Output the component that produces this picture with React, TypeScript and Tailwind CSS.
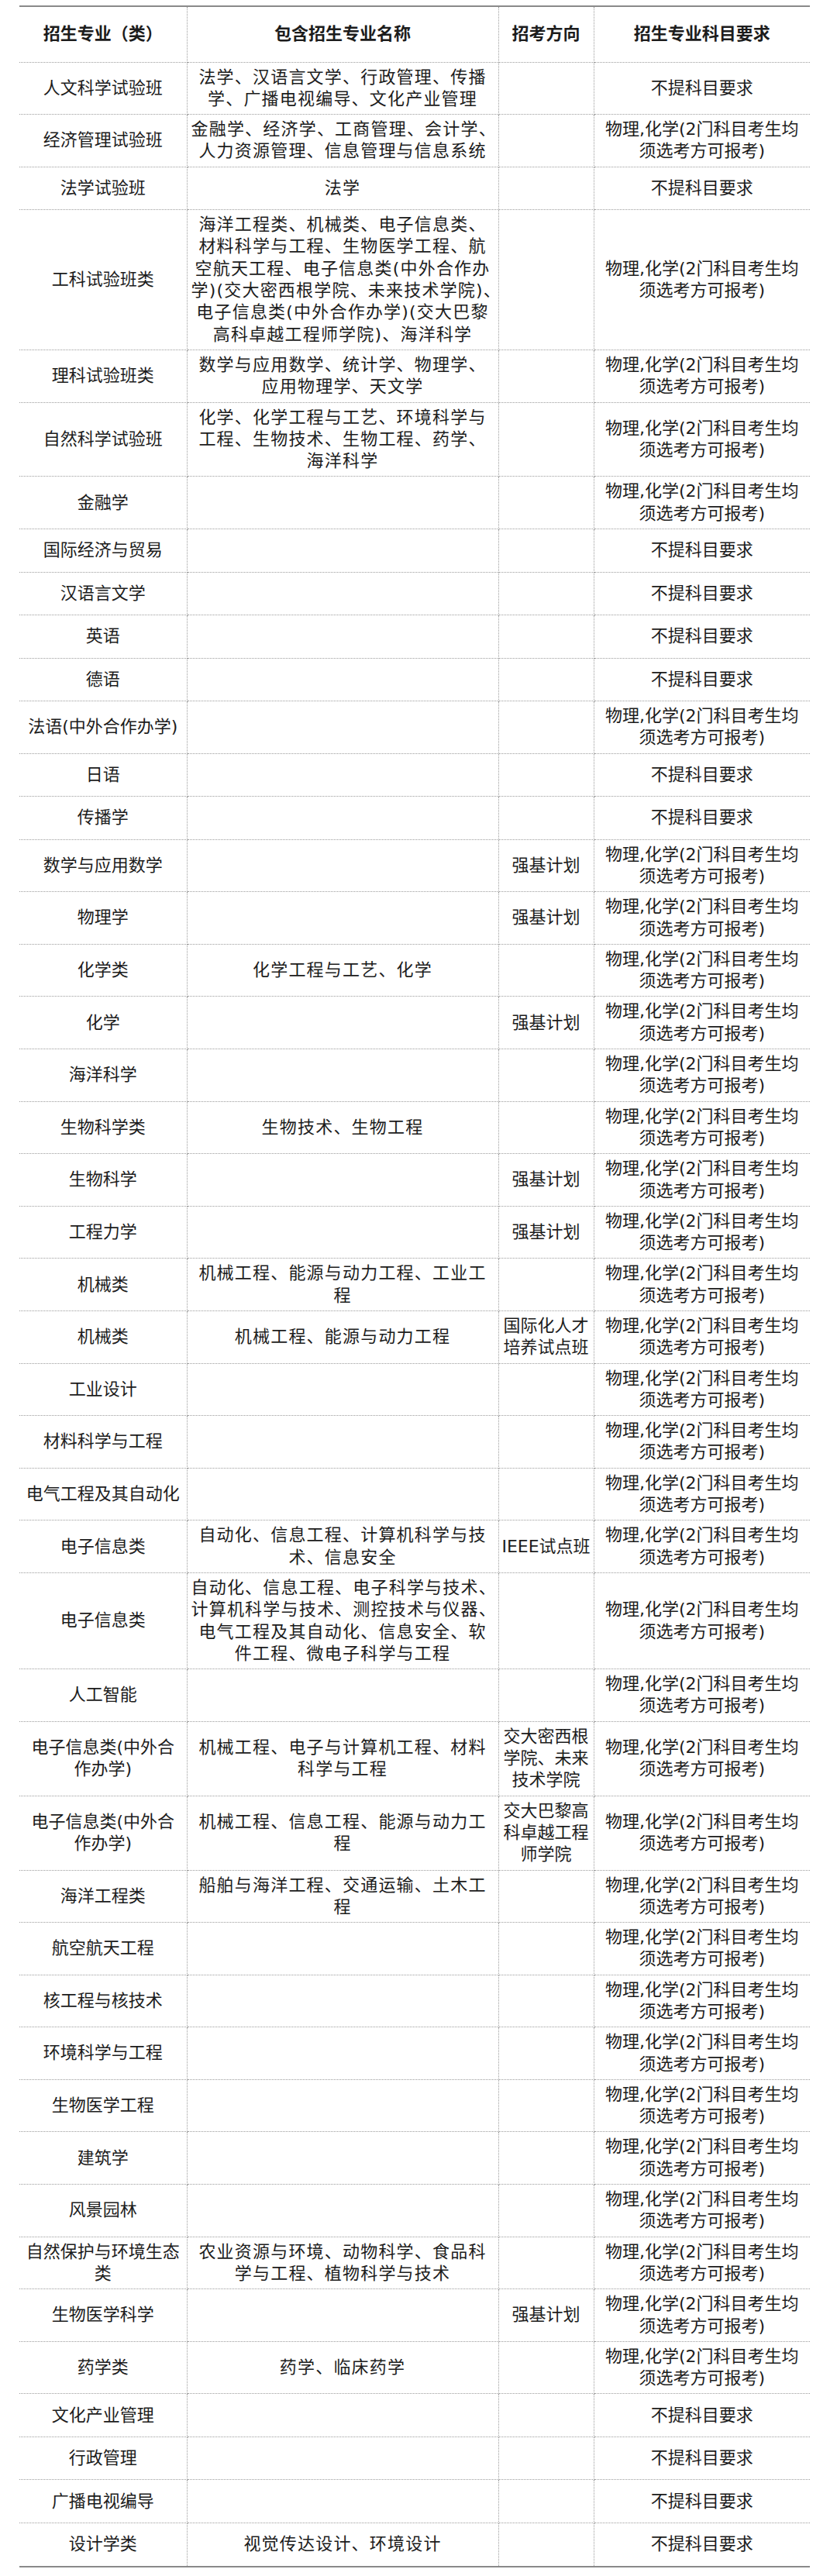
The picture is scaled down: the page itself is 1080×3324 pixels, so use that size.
const PC = "物理,化学(2门科目考生均须选考方可报考)";
const NO = "不提科目要求";

type Row = { name: string; majors?: string[]; track?: string; req: string };

const rows: Row[] = [
  { name: "人文科学试验班", majors: ["法学、汉语言文学、行政管理、传播", "学、广播电视编导、文化产业管理"], req: NO },
  { name: "经济管理试验班", majors: ["金融学、经济学、工商管理、会计学、", "人力资源管理、信息管理与信息系统"], req: PC },
  { name: "法学试验班", majors: ["法学"], req: NO },
  {
    name: "工科试验班类",
    majors: [
      "海洋工程类、机械类、电子信息类、",
      "材料科学与工程、生物医学工程、航",
      "空航天工程、电子信息类(中外合作办",
      "学)(交大密西根学院、未来技术学院)、",
      "电子信息类(中外合作办学)(交大巴黎",
      "高科卓越工程师学院)、海洋科学",
    ],
    req: PC,
  },
  { name: "理科试验班类", majors: ["数学与应用数学、统计学、物理学、", "应用物理学、天文学"], req: PC },
  { name: "自然科学试验班", majors: ["化学、化学工程与工艺、环境科学与", "工程、生物技术、生物工程、药学、", "海洋科学"], req: PC },
  { name: "金融学", req: PC },
  { name: "国际经济与贸易", req: NO },
  { name: "汉语言文学", req: NO },
  { name: "英语", req: NO },
  { name: "德语", req: NO },
  { name: "法语(中外合作办学)", req: PC },
  { name: "日语", req: NO },
  { name: "传播学", req: NO },
  { name: "数学与应用数学", track: "强基计划", req: PC },
  { name: "物理学", track: "强基计划", req: PC },
  { name: "化学类", majors: ["化学工程与工艺、化学"], req: PC },
  { name: "化学", track: "强基计划", req: PC },
  { name: "海洋科学", req: PC },
  { name: "生物科学类", majors: ["生物技术、生物工程"], req: PC },
  { name: "生物科学", track: "强基计划", req: PC },
  { name: "工程力学", track: "强基计划", req: PC },
  { name: "机械类", majors: ["机械工程、能源与动力工程、工业工", "程"], req: PC },
  { name: "机械类", majors: ["机械工程、能源与动力工程"], track: "国际化人才培养试点班", req: PC },
  { name: "工业设计", req: PC },
  { name: "材料科学与工程", req: PC },
  { name: "电气工程及其自动化", req: PC },
  { name: "电子信息类", majors: ["自动化、信息工程、计算机科学与技", "术、信息安全"], track: "IEEE试点班", req: PC },
  {
    name: "电子信息类",
    majors: [
      "自动化、信息工程、电子科学与技术、",
      "计算机科学与技术、测控技术与仪器、",
      "电气工程及其自动化、信息安全、软",
      "件工程、微电子科学与工程",
    ],
    req: PC,
  },
  { name: "人工智能", req: PC },
  {
    name: "电子信息类(中外合作办学)",
    majors: ["机械工程、电子与计算机工程、材料", "科学与工程"],
    track: "交大密西根学院、未来技术学院",
    req: PC,
  },
  {
    name: "电子信息类(中外合作办学)",
    majors: ["机械工程、信息工程、能源与动力工", "程"],
    track: "交大巴黎高科卓越工程师学院",
    req: PC,
  },
  { name: "海洋工程类", majors: ["船舶与海洋工程、交通运输、土木工", "程"], req: PC },
  { name: "航空航天工程", req: PC },
  { name: "核工程与核技术", req: PC },
  { name: "环境科学与工程", req: PC },
  { name: "生物医学工程", req: PC },
  { name: "建筑学", req: PC },
  { name: "风景园林", req: PC },
  { name: "自然保护与环境生态类", majors: ["农业资源与环境、动物科学、食品科", "学与工程、植物科学与技术"], req: PC },
  { name: "生物医学科学", track: "强基计划", req: PC },
  { name: "药学类", majors: ["药学、临床药学"], req: PC },
  { name: "文化产业管理", req: NO },
  { name: "行政管理", req: NO },
  { name: "广播电视编导", req: NO },
  { name: "设计学类", majors: ["视觉传达设计、环境设计"], req: NO },
];

const line = "border-dotted border-[#9c9c9c]";

export default function App() {
  return (
    <div className="min-h-[3324px] bg-white pt-[7px] font-['DejaVu_Sans','Noto_Sans_CJK_SC',sans-serif] text-[22px] leading-[28.3px] text-[#1c1c1c]">
      <div className="ml-[25px] w-[1020px] border-y-2 border-[#8a8a8a]">
        <table className="w-full table-fixed border-collapse text-center">
          <colgroup>
            <col className="w-[216px]" />
            <col className="w-[402px]" />
            <col className="w-[123px]" />
            <col className="w-[279px]" />
          </colgroup>
          <thead>
            <tr className="h-[71px] font-bold">
              <th className={`${line} border-r border-b px-[6px]`}>招生专业（类）</th>
              <th className={`${line} border-r border-b px-[5px]`}>包含招生专业名称</th>
              <th className={`${line} border-r border-b px-0`}>招考方向</th>
              <th className={`${line} border-b px-[6px]`}>招生专业科目要求</th>
            </tr>
          </thead>
          <tbody>
            {rows.map((r, i) => {
              const b = i < rows.length - 1 ? "border-b" : "";
              return (
                <tr key={i} className="h-[55.5px]">
                  <td className={`${line} ${b} border-r px-[6px] py-[5px] align-middle`}>{r.name}</td>
                  <td className={`${line} ${b} border-r px-[5px] py-[5px] align-middle whitespace-nowrap tracking-[1.2px]`}>
                    {r.majors?.map((m, j) => (
                      <div key={j}>{m}</div>
                    ))}
                  </td>
                  <td className={`${line} ${b} border-r px-0 py-[5px] align-middle`}>{r.track}</td>
                  <td className={`${line} ${b} px-[6px] py-[5px] align-middle`}>{r.req}</td>
                </tr>
              );
            })}
          </tbody>
        </table>
      </div>
    </div>
  );
}
